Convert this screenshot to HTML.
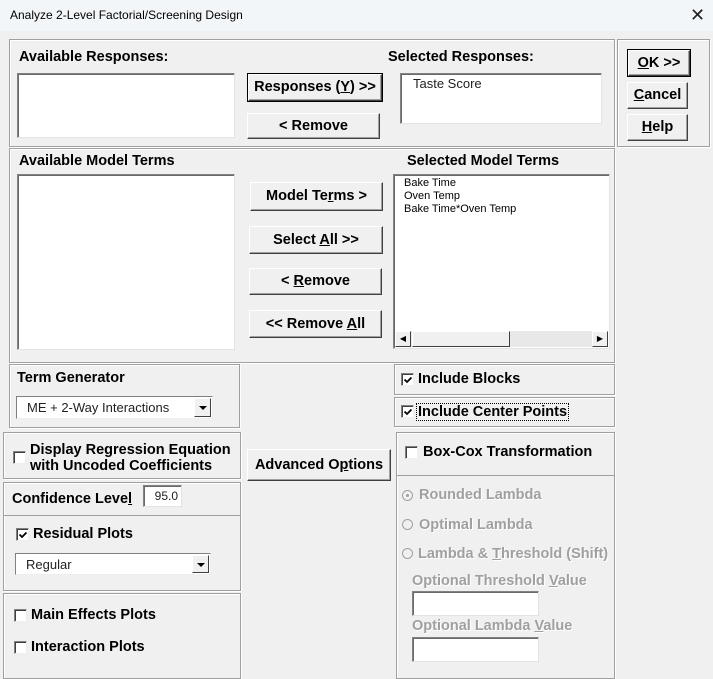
<!DOCTYPE html>
<html><head><style>
*{box-sizing:border-box;margin:0;padding:0}
body{width:713px;height:675px;background:#f0f0f0;font-family:"Liberation Sans",sans-serif;position:relative;overflow:hidden;color:#000}
.a{position:absolute}
.title{left:0;top:0;width:713px;height:31px;background:#f3f6f9;font-size:12px;line-height:31px;padding-left:10px}
.grp{position:absolute;border:1px solid #a0a0a0;box-shadow:inset 1px 1px 0 #fff,1px 1px 0 #fff}
.lbl{position:absolute;font-weight:bold;font-size:14.5px;white-space:nowrap;margin-top:1px}
.list{position:absolute;background:#fff;border:1px solid #828282;border-right-color:#e3e3e3;border-bottom-color:#e3e3e3;box-shadow:inset 1px 1px 0 #6a6a6a}
.btn{position:absolute;background:#f0f0f0;border:1px solid;border-color:#fff #404040 #404040 #fff;box-shadow:inset -1px -1px 0 #a0a0a0;font-weight:bold;font-size:14.5px;text-align:center;white-space:nowrap}
.def{outline:1px solid #000}
.cb{position:absolute;width:13px;height:13px;background:#fff;border:1px solid #808080;border-right-color:#eee;border-bottom-color:#eee;box-shadow:inset 1px 1px 0 #404040}
.cb svg{position:absolute;left:1px;top:1px}
.combo{position:absolute;background:#fff;border:1px solid #808080;border-right-color:#eee;border-bottom-color:#eee;font-size:13px;padding-left:10px;color:#222}
.arr{position:absolute;right:1px;top:1px;width:17px;bottom:1px;background:#f0f0f0;border:1px solid;border-color:#fff #404040 #404040 #fff}
.arr:after{content:"";position:absolute;left:4px;top:7px;border:4px solid transparent;border-top:4px solid #000}
.dis{color:#a0a0a0;text-shadow:1px 1px 0 #fff}
.rad{position:absolute;width:11px;height:11px;border-radius:50%;border:1px solid #a0a0a0;background:#f0f0f0}
.it{position:absolute;font-size:11px;white-space:nowrap}
</style></head><body>
<div class="a title">Analyze 2-Level Factorial/Screening Design</div>
<div class="a" style="left:690px;top:5px;font-size:18px;color:#222">✕</div>

<div class="grp" style="left:9px;top:39px;width:606px;height:108px"></div>
<div class="grp" style="left:617px;top:39px;width:93px;height:108px"></div>
<div class="lbl" style="left:19px;top:48px">Available Responses:</div>
<div class="list" style="left:17px;top:73px;width:218px;height:65px"></div>
<div class="btn def" style="left:248px;top:74px;width:134px;height:27px;line-height:25px">Responses (<u>Y</u>) &gt;&gt;</div>
<div class="btn" style="left:247px;top:113px;width:133px;height:26px;line-height:24px">&lt; Remove</div>
<div class="lbl" style="left:388px;top:48px">Selected Responses:</div>
<div class="list" style="left:400px;top:73px;width:202px;height:51px"><span class="a" style="left:12px;top:2px;font-size:13px;color:#222">Taste Score</span></div>
<div class="btn def" style="left:628px;top:50px;width:62px;height:26px;line-height:24px"><u>O</u>K &gt;&gt;</div>
<div class="btn" style="left:627px;top:82px;width:61px;height:27px;line-height:25px"><u>C</u>ancel</div>
<div class="btn" style="left:627px;top:114px;width:61px;height:27px;line-height:25px"><u>H</u>elp</div>

<div class="grp" style="left:9px;top:148px;width:606px;height:215px"></div>
<div class="lbl" style="left:19px;top:152px">Available Model Terms</div>
<div class="list" style="left:17px;top:174px;width:218px;height:176px"></div>
<div class="btn" style="left:250px;top:182px;width:133px;height:29px;line-height:27px">Model Te<u>r</u>ms &gt;</div>
<div class="btn" style="left:249px;top:226px;width:134px;height:28px;line-height:26px">Select <u>A</u>ll &gt;&gt;</div>
<div class="btn" style="left:249px;top:268px;width:133px;height:27px;line-height:25px">&lt; <u>R</u>emove</div>
<div class="btn" style="left:249px;top:310px;width:133px;height:28px;line-height:26px">&lt;&lt; Remove <u>A</u>ll</div>
<div class="lbl" style="left:407px;top:152px">Selected Model Terms</div>
<div class="list" style="left:393px;top:174px;width:217px;height:175px">
<span class="it" style="left:10px;top:2px">Bake Time</span>
<span class="it" style="left:10px;top:15px">Oven Temp</span>
<span class="it" style="left:10px;top:28px">Bake Time*Oven Temp</span>
<div class="a" style="left:1px;bottom:1px;right:1px;height:16px;background:#e8e8e8">
<div class="a" style="left:0;top:0;width:16px;height:16px;border:1px solid;border-color:#fff #404040 #404040 #fff;background:#f0f0f0;font-size:8px;line-height:14px;text-align:center">◀</div>
<div class="a" style="left:17px;top:0;width:98px;height:16px;border:1px solid;border-color:#fff #404040 #404040 #fff;background:#f0f0f0"></div>
<div class="a" style="right:0;top:0;width:16px;height:16px;border:1px solid;border-color:#fff #404040 #404040 #fff;background:#f0f0f0;font-size:8px;line-height:14px;text-align:center">▶</div>
</div></div>

<div class="grp" style="left:9px;top:364px;width:231px;height:64px"></div>
<div class="lbl" style="left:17px;top:369px">Term Generator</div>
<div class="combo" style="left:16px;top:396px;width:197px;height:23px;line-height:21px">ME + 2-Way Interactions<div class="arr"></div></div>
<div class="grp" style="left:394px;top:364px;width:221px;height:31px"></div>
<div class="cb" style="left:401px;top:373px"><svg width="10" height="10"><path d="M1.5 4.5 L4 7 L8.5 2.5" stroke="#000" stroke-width="1.8" fill="none"/></svg></div>
<div class="lbl" style="left:418px;top:370px">Include Blocks</div>
<div class="grp" style="left:394px;top:397px;width:221px;height:30px"></div>
<div class="cb" style="left:401px;top:405px"><svg width="10" height="10"><path d="M1.5 4.5 L4 7 L8.5 2.5" stroke="#000" stroke-width="1.8" fill="none"/></svg></div>
<div class="lbl" style="left:417px;top:403px;outline:1px dotted #000;padding:0 1px">Include Center Points</div>

<div class="grp" style="left:3px;top:432px;width:238px;height:47px"></div>
<div class="cb" style="left:13px;top:451px"></div>
<div class="lbl" style="left:30px;top:441px;line-height:16px">Display Regression Equation<br>with Uncoded Coefficients</div>
<div class="btn" style="left:247px;top:449px;width:144px;height:32px;line-height:30px">Advanced O<u>p</u>tions</div>
<div class="grp" style="left:3px;top:482px;width:238px;height:109px"></div>
<div class="a" style="left:4px;top:515px;width:236px;height:1px;background:#a0a0a0"></div>
<div class="lbl" style="left:12px;top:490px">Confidence Leve<u>l</u></div>
<div class="list" style="left:143px;top:485px;width:39px;height:22px;font-size:12px;text-align:right;padding-right:3px;line-height:20px;color:#222">95.0</div>
<div class="cb" style="left:16px;top:528px"><svg width="10" height="10"><path d="M1.5 4.5 L4 7 L8.5 2.5" stroke="#000" stroke-width="1.8" fill="none"/></svg></div>
<div class="lbl" style="left:33px;top:525px">Residual Plots</div>
<div class="combo" style="left:15px;top:553px;width:196px;height:22px;line-height:21px">Regular<div class="arr"></div></div>
<div class="grp" style="left:3px;top:593px;width:238px;height:86px"></div>
<div class="cb" style="left:14px;top:609px"></div>
<div class="lbl" style="left:31px;top:606px">Main Effects Plots</div>
<div class="cb" style="left:14px;top:641px"></div>
<div class="lbl" style="left:31px;top:638px">Interaction Plots</div>

<div class="grp" style="left:396px;top:432px;width:219px;height:247px"></div>
<div class="a" style="left:397px;top:475px;width:217px;height:1px;background:#a0a0a0"></div>
<div class="cb" style="left:405px;top:446px"></div>
<div class="lbl" style="left:423px;top:443px">Box-Cox Transformation</div>
<div class="rad" style="left:402px;top:490px"><div class="a" style="left:3px;top:3px;width:3px;height:3px;background:#a0a0a0;border-radius:50%"></div></div>
<div class="lbl dis" style="left:419px;top:486px">Rounded Lambda</div>
<div class="rad" style="left:402px;top:519px"></div>
<div class="lbl dis" style="left:419px;top:516px">Optimal Lambda</div>
<div class="rad" style="left:402px;top:548px"></div>
<div class="lbl dis" style="left:418px;top:545px">Lambda &amp; <u>T</u>hreshold (Shift)</div>
<div class="lbl dis" style="left:412px;top:572px">Optional Threshold <u>V</u>alue</div>
<div class="list" style="left:412px;top:591px;width:127px;height:25px"></div>
<div class="lbl dis" style="left:412px;top:617px">Optional Lambda <u>V</u>alue</div>
<div class="list" style="left:412px;top:637px;width:127px;height:25px"></div>
</body></html>
